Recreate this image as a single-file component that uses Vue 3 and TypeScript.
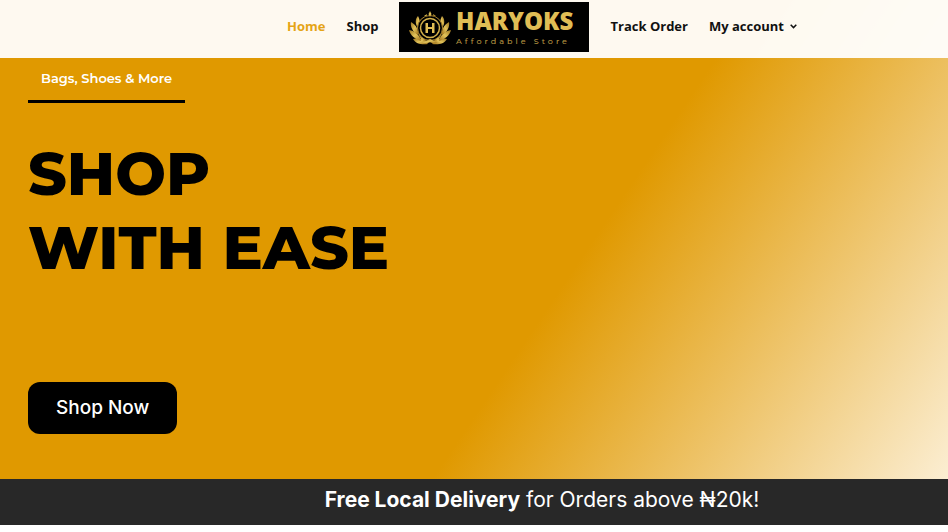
<script setup lang="ts">
interface NavItem {
  label: string
  active?: boolean
  menu?: boolean
}

const leading: NavItem[] = [{ label: 'Home', active: true }, { label: 'Shop' }]
const trailing: NavItem[] = [{ label: 'Track Order' }, { label: 'My account', menu: true }]

// Leaves of the left half of the wreath; the right half mirrors them.
const leaves: string[] = [
  'M19 36C13 37 7 36 4 31C11 29 16 32 19 36Z',
  'M12 33C6 31 1 27 0 22C6 23 11 27 12 33Z',
  'M9 27C4 24 1 19 2 14C7 17 10 22 9 27Z',
  'M9 20C6 16 6 11 9 8C11 12 12 16 9 20Z',
  'M12 30C9 27 8 23 10 19C13 22 14 26 12 30Z',
  'M17 34C13 33 11 30 10 27C15 28 17 31 17 34Z',
]
</script>

<template>
  <div class="page">
    <header class="header">
      <nav class="nav" aria-label="Main">
        <a v-for="item in leading" :key="item.label" href="#" :class="['link', { active: item.active }]">{{ item.label }}</a>
        <a class="logo" href="#" aria-label="Haryoks Affordable Store">
          <svg width="190" height="50" viewBox="0 0 190 50">
            <defs>
              <linearGradient id="gold" x1="0" y1="0" x2="1" y2="1">
                <stop offset="0" stop-color="#9a7420" />
                <stop offset="0.5" stop-color="#e2c35a" />
                <stop offset="1" stop-color="#9c6c16" />
              </linearGradient>
            </defs>
            <rect width="190" height="50" fill="#000" />
            <g transform="translate(10 6)" fill="url(#gold)">
              <path v-for="leaf in leaves" :key="leaf" :d="leaf" />
              <g transform="translate(42 0) scale(-1 1)">
                <path v-for="leaf in leaves" :key="leaf" :d="leaf" />
              </g>
              <circle cx="21" cy="20" r="12.5" fill="#000" stroke="#a9842f" stroke-width="1" />
              <circle cx="21" cy="20" r="9.5" fill="#000" stroke="#d3b04b" stroke-width="1.5" />
              <path d="M21 3L22.5 6L21 9L19.5 6ZM15 8L18 6L17.5 8ZM27 8L24 6L24.5 8Z" />
              <path d="M16.5 15H19V19H23V15H25.5V25H23V21H19V25H16.5Z" fill="#e0bd55" />
              <path d="M13 34C18 33 20 31 21 31C22 31 24 33 29 34C25 36 22 35 21 34C20 35 17 36 13 34Z" />
            </g>
            <text x="57" y="28" class="brand">HARYOKS</text>
            <text x="57" y="42" class="tagline">Affordable Store</text>
          </svg>
        </a>
        <a v-for="item in trailing" :key="item.label" href="#" class="link">
          {{ item.label }}
          <svg v-if="item.menu" class="chevron" width="7" height="5" viewBox="0 0 7 5" aria-hidden="true">
            <path d="M0.7 0.8L3.5 3.6L6.3 0.8" fill="none" stroke="currentColor" stroke-width="1.5" />
          </svg>
        </a>
      </nav>
    </header>

    <main class="hero">
      <p class="eyebrow">Bags, Shoes &amp; More</p>
      <h1 class="title">SHOP<br />WITH EASE</h1>
      <button class="cta" type="button">Shop Now</button>
    </main>

    <aside class="notice">
      <p><strong>Free Local Delivery</strong> for Orders above ₦20k!</p>
    </aside>
  </div>
</template>

<style>
body {
  margin: 0;
  background: #fff;
}
</style>

<style scoped>
.page {
  font-family: Inter, "Liberation Sans", sans-serif;
  background: linear-gradient(124deg, #e09900 58%, #fdf3df 100%);
}

.header {
  background: rgba(255, 255, 255, 0.94);
  padding: 2px 0 6px 136px;
}

.nav {
  display: flex;
  align-items: center;
  justify-content: center;
  gap: 21px;
  font: 700 13px/20px "Open Sans", "Noto Sans", sans-serif;
}

.link {
  display: flex;
  align-items: center;
  gap: 6px;
  padding-bottom: 2px;
  color: #111;
  text-decoration: none;
  white-space: nowrap;
}

.link.active {
  color: #e5a416;
}

.logo,
.logo svg {
  display: block;
}

.brand {
  font: 800 24px "Open Sans", sans-serif;
  fill: #e0bd55;
}

.tagline {
  font: 500 8px Montserrat, Inter, sans-serif;
  letter-spacing: 3px;
  fill: #b89743;
}

.hero {
  display: flex;
  flex-direction: column;
  align-items: flex-start;
  padding: 10px 28px 45px;
}

.eyebrow {
  margin: 0;
  padding: 0 13px 12px;
  border-bottom: 3px solid #000;
  color: #fff;
  font: 600 13px/20px Montserrat, Inter, sans-serif;
}

.title {
  margin: 34px 0 97px;
  color: #000;
  font: 800 60px/74px Montserrat, Inter, sans-serif;
}

.cta {
  padding: 14px 28px;
  border: 0;
  border-radius: 12px;
  background: #000;
  color: #fff;
  font: 500 19px/24px Inter, sans-serif;
  cursor: pointer;
}

.notice {
  padding: 6px 0 10px 136px;
  background: #282828;
  color: #fff;
  text-align: center;
  font-size: 21px;
  line-height: 30px;
}

.notice p {
  margin: 0;
}
</style>
